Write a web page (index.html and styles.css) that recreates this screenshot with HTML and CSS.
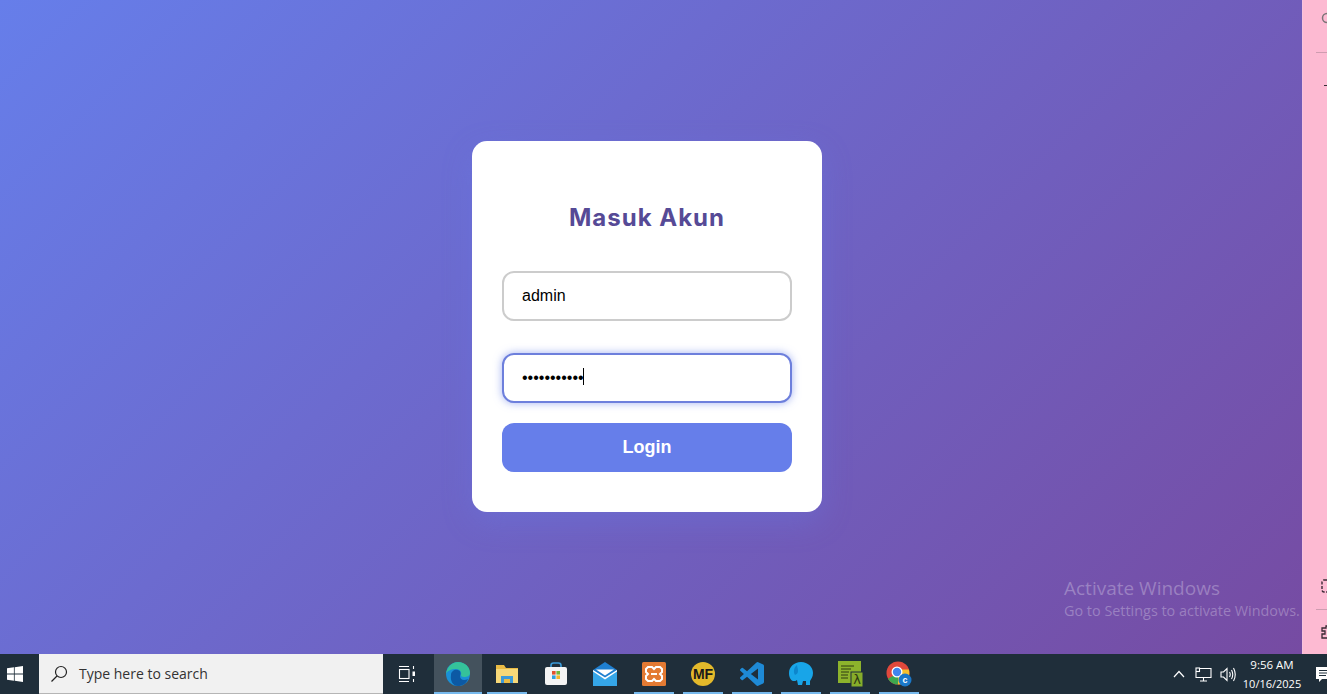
FILE: index.html
```html
<!DOCTYPE html>
<html lang="en">
<head>
  <meta charset="UTF-8">
  <meta name="viewport" content="width=device-width, initial-scale=1.0">
  <title>Masuk Akun</title>
  <link rel="stylesheet" href="styles.css">
</head>
<body>

<div class="screen">
  <div class="desktop">
    <main class="page">
      <div class="card">
        <h2>Masuk Akun</h2>
        <div class="field">
          <input type="text" value="admin" placeholder="Username">
        </div>
        <div class="field field-last">
          <input type="password" class="focused" value="12345678901" placeholder="Password">
          <span class="caret"></span>
        </div>
        <button type="button">Login</button>
      </div>
      <div class="activate">
        <p class="activate-title">Activate Windows</p>
        <p class="activate-sub">Go to Settings to activate Windows.</p>
      </div>
    </main>

    <aside class="sidebar">
      <div class="side-row side-search">
        <svg width="14" height="14" viewBox="0 0 14 14"><circle cx="6" cy="6" r="4.5" fill="none" stroke="#7d7478" stroke-width="1.5"/><path d="M9.5 9.5L13 13" stroke="#7d7478" stroke-width="1.5"/></svg>
      </div>
      <div class="side-line"></div>
      <div class="side-dash"></div>
      <div class="side-bottom">
        <div class="side-row">
          <svg width="14" height="16" viewBox="0 0 14 16"><rect x="1" y="1" width="11" height="12" rx="2" fill="none" stroke="#3a2a35" stroke-width="1.4" stroke-dasharray="3 1.5"/></svg>
        </div>
        <div class="side-line"></div>
        <div class="side-row">
          <svg width="14" height="16" viewBox="0 0 14 16"><path d="M1 4h4V2h3v2h4v3H9v3h3v4H1v-4h3V7H1z" fill="none" stroke="#3a2a35" stroke-width="1.3"/></svg>
        </div>
      </div>
    </aside>
  </div>

  <footer class="taskbar">
    <div class="start">
      <svg width="16" height="16" viewBox="0 0 16 16"><path fill="#fff" d="M0 2.300L6.900 1.300V7.600H0zM7.700 1.200L16 0V7.600H7.700zM0 8.400H6.900V14.700L0 13.700zM7.700 8.400H16V16L7.700 14.800z"/></svg>
    </div>
    <div class="search">
      <svg width="18" height="18" viewBox="0 0 18 18"><circle cx="11" cy="7" r="5.5" fill="none" stroke="#222" stroke-width="1.2"/><path d="M7 11L1.500 16.500" stroke="#222" stroke-width="1.3"/></svg>
      <span>Type here to search</span>
    </div>
    <div class="taskview">
      <svg width="18" height="18" viewBox="0 0 18 18" fill="none" stroke="#fff" stroke-width="1.1"><path d="M1 1.500h10M1 16.500h10"/><rect x="1.500" y="4.500" width="9.500" height="9"/><path d="M15.500 1v3M15.500 14v3"/><rect x="14.500" y="6.500" width="2.500" height="4.500" fill="#fff" stroke="none"/></svg>
    </div>

    <div class="apps">
      <div class="app active">
        <svg width="26" height="26" viewBox="0 0 26 26">
          <circle cx="13" cy="13" r="12" fill="#1a8fd6"/>
          <path d="M1 13C2 5 8 1 13 1c7 0 12 5 12 11 0 3-3 4-6 4-2 0-3-1-3-2 1-3-1-6-5-6-5 0-9 2-10 5z" fill="#35c29a"/>
          <path d="M6 14c0-4 4-6 7-5 3 1 3 4 2 6 0 4 4 5 8 3-2 5-6 7-10 7-5 0-8-5-7-11z" fill="#0c59a4"/>
        </svg>
      </div>
      <div class="app running">
        <svg width="22" height="18" viewBox="0 0 22 18">
          <path d="M0 0h8l2 3h12v15H0z" fill="#e9bb45"/>
          <rect x="0" y="4" width="22" height="14" fill="#f6d878"/>
          <rect x="5" y="11" width="12" height="7" fill="#3b9ad9"/>
          <rect x="8" y="14" width="6" height="4" fill="#e9bb45"/>
        </svg>
      </div>
      <div class="app">
        <svg width="24" height="24" viewBox="0 0 24 24">
          <path d="M7 6V3.500C7 2 8 1 9.500 1h5C16 1 17 2 17 3.500V6" fill="none" stroke="#3a9ad9" stroke-width="1.6"/>
          <rect x="1" y="5" width="22" height="18" rx="2" fill="#f4f4f4"/>
          <rect x="8" y="9" width="3.600" height="3.600" fill="#e2502d"/>
          <rect x="12.400" y="9" width="3.600" height="3.600" fill="#72b63c"/>
          <rect x="8" y="13.400" width="3.600" height="3.600" fill="#2f9fe0"/>
          <rect x="12.400" y="13.400" width="3.600" height="3.600" fill="#f5b62c"/>
        </svg>
      </div>
      <div class="app">
        <svg width="24" height="24" viewBox="0 0 24 24">
          <path d="M0 8L12 0l12 8v16H0z" fill="#1f7fd0"/>
          <path d="M0 9l12 8 12-8v15H0z" fill="#35a6e8"/>
          <path d="M3 7.500h18L12 13.500z" fill="#fff"/>
          <path d="M0 8l12 7.500L24 8v1.500l-12 8-12-8z" fill="#fff"/>
        </svg>
      </div>
      <div class="app running">
        <svg width="24" height="24" viewBox="0 0 24 24">
          <rect width="24" height="24" rx="1.500" fill="#e37a33"/>
          <path d="M6 5h4l2 2 2-2h4l2 2v3l-2 2 2 2v3l-2 2h-4l-2-2-2 2H6l-2-2v-3l2-2-2-2V7z" fill="none" stroke="#fff" stroke-width="2"/>
          <path d="M9 12h6" stroke="#fff" stroke-width="2"/>
        </svg>
      </div>
      <div class="app running">
        <span class="mf">MF</span>
      </div>
      <div class="app running">
        <svg width="24" height="24" viewBox="0 0 24 24">
          <path fill="#1e8ad6" d="M23.150 2.587L18.210.21a1.494 1.494 0 0 0-1.705.29l-9.460 8.630-4.120-3.128a.999.999 0 0 0-1.276.057L.327 7.261A1 1 0 0 0 .326 8.740L3.899 12 .326 15.260a1 1 0 0 0 .001 1.479L1.650 17.940a.999.999 0 0 0 1.276.057l4.120-3.128 9.460 8.630a1.492 1.492 0 0 0 1.704.29l4.942-2.377A1.500 1.500 0 0 0 24 20.060V3.939a1.500 1.500 0 0 0-.85-1.352zm-5.146 14.861L10.826 12l7.178-5.448v10.896z"/>
        </svg>
      </div>
      <div class="app running">
        <svg width="24" height="24" viewBox="0 0 24 24">
          <path d="M12 0c7 0 12 5 12 11 0 4-2 6-3 8v4h-4v-4h-3l-1 4H9l-1-5c-1 1-2 1-4 1-3-1-4-5-4-8C0 5 5 0 12 0z" fill="#18a5e8"/>
          <path d="M8 3c-3 2-4 7-2 10 2-1 3-2 3-4 0-3-1-4-1-6z" fill="#0d86cc"/>
        </svg>
      </div>
      <div class="app running">
        <svg width="25" height="26" viewBox="0 0 25 26">
          <rect x="0" y="0" width="23" height="22" fill="#8db32c"/>
          <path d="M3 5h13M3 8h10M3 11h8M3 14h7M3 17h7" stroke="#2f3b12" stroke-width="1"/>
          <rect x="13" y="11" width="12" height="15" fill="#86ad2a" stroke="#1f2e3a" stroke-width="1"/>
          <text x="19" y="23" text-anchor="middle" class="lambda">&#955;</text>
        </svg>
      </div>
      <div class="app running">
        <svg width="28" height="28" viewBox="0 0 28 28">
          <circle cx="13" cy="13" r="11.500" fill="#e0483c"/>
          <path d="M13 13L3 18.700A11.500 11.500 0 0 0 13 24.500z" fill="#3da74e"/>
          <path d="M13 13V24.500A11.500 11.500 0 0 0 23.800 9.500H13z" fill="#f6c02c"/>
          <circle cx="12" cy="12" r="5.500" fill="#fff"/>
          <circle cx="12" cy="12" r="4.200" fill="#4185ee"/>
          <circle cx="20" cy="20" r="6.500" fill="#1a78c9"/>
          <text x="20" y="23" text-anchor="middle" class="badge-c">c</text>
        </svg>
      </div>
    </div>

    <div class="tray">
      <div class="tray-icon chevron">
        <svg width="12" height="8" viewBox="0 0 12 8"><path d="M1 7l5-5.500L11 7" fill="none" stroke="#fff" stroke-width="1.2"/></svg>
      </div>
      <div class="tray-icon net">
        <svg width="17" height="15" viewBox="0 0 17 15" fill="none" stroke="#fff" stroke-width="1.1"><path d="M4 1.500h12v9H1V5"/><rect x="1" y="1" width="3.500" height="3.500"/><path d="M8.500 10.500v3M5 14h7"/></svg>
      </div>
      <div class="tray-icon vol">
        <svg width="17" height="15" viewBox="0 0 17 15" fill="none" stroke="#fff" stroke-width="1.1"><path d="M1 5h2.500L7 1.500v12L3.500 10H1z"/><path d="M9.500 5q1.500 2.500 0 5M11.500 3q2.500 4.500 0 9M13.500 1q3.500 6.500 0 13"/></svg>
      </div>
      <div class="clock">
        <span>9:56 AM</span>
        <span class="clock-date">10/16/2025</span>
      </div>
      <div class="notify">
        <svg width="16" height="24" viewBox="0 0 16 24"><path d="M0 5h16v12H6l-3 3v-3H0z" fill="#fff"/><path d="M3 8.500h10M3 11h10M3 13.500h7" stroke="#1f2e3a" stroke-width="1"/></svg>
      </div>
    </div>
  </footer>
</div>

</body>
</html>
```

FILE: styles.css
```css
* {
  box-sizing: border-box;
}

html, body {
  margin: 0;
  height: 100%;
  overflow: hidden;
}

body {
  font-family: "Liberation Sans", Arial, sans-serif;
}

.screen {
  display: flex;
  flex-direction: column;
  height: 100vh;
}

.desktop {
  flex: 1;
  display: flex;
  min-height: 0;
}

.page {
  position: relative;
  flex: 1;
  display: flex;
  justify-content: center;
  align-items: center;
  padding: 0 8px 1px 0;
  background: linear-gradient(135deg, #667eea, #764ba2);
}

.card {
  width: 350px;
  padding: 40px 30px;
  background-color: #fff;
  border-radius: 15px;
  box-shadow: 0 10px 30px rgba(102, 126, 234, 0.3);
}

h2 {
  margin: 19px 0 35px;
  font-family: Inter, "Noto Sans", sans-serif;
  font-size: 24px;
  font-weight: 700;
  line-height: 36px;
  letter-spacing: 1px;
  text-align: center;
  color: #564a96;
}

.field {
  position: relative;
  margin-bottom: 32px;
}

.field-last {
  margin-bottom: 20px;
}

input {
  display: block;
  width: 100%;
  height: 50px;
  padding: 0 18px;
  font-family: "Liberation Sans", Arial, sans-serif;
  font-size: 16px;
  color: #000;
  background-color: #fff;
  border: 2px solid #ccc;
  border-radius: 12px;
  outline: none;
}

input.focused {
  border-color: #6d7fdc;
  box-shadow: 0 0 8px rgba(102, 126, 234, 0.6);
}

.caret {
  position: absolute;
  left: 81px;
  top: 15px;
  width: 1px;
  height: 17px;
  background-color: #000;
}

button {
  display: block;
  width: 100%;
  height: 49px;
  font-family: "Liberation Sans", Arial, sans-serif;
  font-size: 18px;
  font-weight: 700;
  color: #fff;
  background-color: #667eea;
  border: none;
  border-radius: 12px;
  cursor: pointer;
}

.activate {
  position: absolute;
  left: 1064px;
  top: 576px;
  color: rgba(255, 255, 255, 0.28);
  font-family: "Open Sans", "Noto Sans", sans-serif;
  white-space: nowrap;
}

.activate p {
  margin: 0;
}

.activate-title {
  font-size: 19px;
  line-height: 25px;
}

.activate-sub {
  font-size: 14.4px;
  line-height: 20px;
}

.sidebar {
  flex: 0 0 25px;
  display: flex;
  flex-direction: column;
  overflow: hidden;
  background-color: #fdbad2;
  border-left: 1px solid #f7c3dd;
}

.side-row {
  height: 22px;
  padding-left: 18px;
  display: flex;
  align-items: center;
}

.side-row svg {
  flex-shrink: 0;
}

.side-search {
  margin-top: 8px;
  margin-bottom: 22px;
}

.side-line {
  height: 1px;
  margin-left: 13px;
  background-color: #cf9cb0;
}

.side-dash {
  width: 6px;
  height: 1px;
  margin: 32px 0 0 21px;
  background-color: #3a2a35;
}

.side-bottom {
  margin-top: auto;
  padding-bottom: 11px;
}

.side-bottom .side-line {
  margin-top: 11px;
  margin-bottom: 11px;
}

.taskbar {
  flex: 0 0 40px;
  display: flex;
  background-color: #1f2e3a;
  color: #fff;
  font-family: "Open Sans", "Noto Sans", sans-serif;
}

.start {
  width: 39px;
  display: flex;
  align-items: center;
  justify-content: center;
  padding-right: 9px;
}

.search {
  width: 344px;
  display: flex;
  align-items: center;
  gap: 11px;
  padding-left: 11px;
  background-color: #f1f1f1;
  border-bottom: 1px solid #b5b5b5;
  color: #333;
  font-size: 14px;
}

.taskview {
  width: 48px;
  display: flex;
  align-items: center;
  justify-content: center;
}

.apps {
  display: flex;
  gap: 1px;
  margin-left: 3px;
}

.app {
  position: relative;
  width: 48px;
  display: flex;
  align-items: center;
  justify-content: center;
}

.app.active {
  background-color: #44525d;
}

.app.active::after,
.app.running::after {
  content: "";
  position: absolute;
  left: 4px;
  right: 4px;
  bottom: 0;
  height: 2px;
  background-color: #76b9ed;
}

.app.active::after {
  left: 0;
  right: 0;
}

.mf {
  width: 24px;
  height: 24px;
  border-radius: 50%;
  background-color: #e3b92b;
  color: #1a1a1a;
  font-family: "Liberation Sans", Arial, sans-serif;
  font-size: 14px;
  font-weight: 700;
  line-height: 24px;
  text-align: center;
}

.lambda {
  font-family: "DejaVu Sans", sans-serif;
  font-size: 13px;
  fill: #2f3b12;
}

.badge-c {
  font-family: "Liberation Sans", Arial, sans-serif;
  font-size: 9px;
  font-weight: 700;
  fill: #fff;
}

.tray {
  margin-left: auto;
  display: flex;
  align-items: center;
}

.tray-icon {
  display: flex;
  justify-content: center;
}

.chevron {
  width: 24px;
}

.net {
  width: 25px;
}

.vol {
  width: 24px;
}

.clock {
  width: 62px;
  display: flex;
  flex-direction: column;
  align-items: center;
  gap: 3px;
  font-size: 11.5px;
  line-height: 16px;
  margin-left: 1px;
}

.clock-date {
  font-size: 11px;
}

.notify {
  width: 24px;
  padding-left: 13px;
  overflow: hidden;
  display: flex;
}

.notify svg {
  flex-shrink: 0;
}
```
